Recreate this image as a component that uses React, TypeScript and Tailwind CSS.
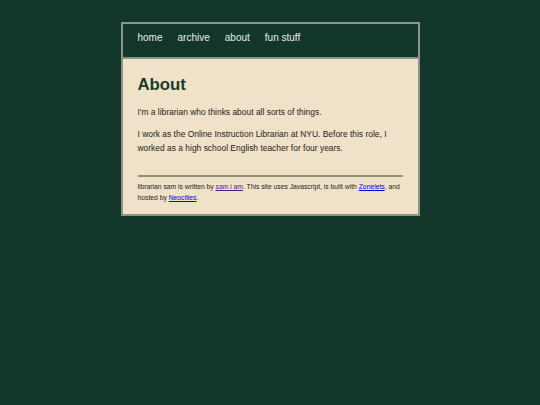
export default function App() {
  const links = ["home", "archive", "about", "fun stuff"];

  return (
    <div className="min-h-screen bg-[#13362a] pt-[22px] font-['Liberation_Sans',Arial,sans-serif]">
      <div className="mx-auto w-[299px] border-2 border-[#8a968c] bg-[#f0e2c8]">
        {/* nav */}
        <nav className="flex h-[35px] items-start gap-[15px] border-b-2 border-[#8a968c] bg-[#13362a] pl-[15px] pt-[8px]">
          {links.map((l) => (
            <a key={l} href="#" className="text-[10px] leading-[12px] text-[#e6ede6]">
              {l}
            </a>
          ))}
        </nav>

        {/* main */}
        <main className="px-[15px] pb-[11px] pt-[16px] text-[#222]">
          <h1 className="text-[16.8px] font-bold leading-[20px] text-[#1b3a29]">About</h1>
          <p className="mt-[10px] text-[8.45px] leading-[14px]">
            I'm a librarian who thinks about all sorts of things.
          </p>
          <p className="mt-[8px] text-[8.45px] leading-[14px]">
            I work as the Online Instruction Librarian at NYU. Before this role, I worked as a high school
            English teacher for four years.
          </p>

          <hr className="mt-[20px] border-t-2 border-[#8d9279]" />

          <footer className="mt-[4px] text-[6.75px] leading-[11px]">
            librarian sam is written by{" "}
            <a href="#" className="text-[#551a8b] underline">
              sam i am
            </a>
            . This site uses Javascript, is built with{" "}
            <a href="#" className="text-[#0000ee] underline">
              Zonelets
            </a>
            , and hosted by{" "}
            <a href="#" className="text-[#0000ee] underline">
              Neocities
            </a>
            .
          </footer>
        </main>
      </div>
    </div>
  );
}
